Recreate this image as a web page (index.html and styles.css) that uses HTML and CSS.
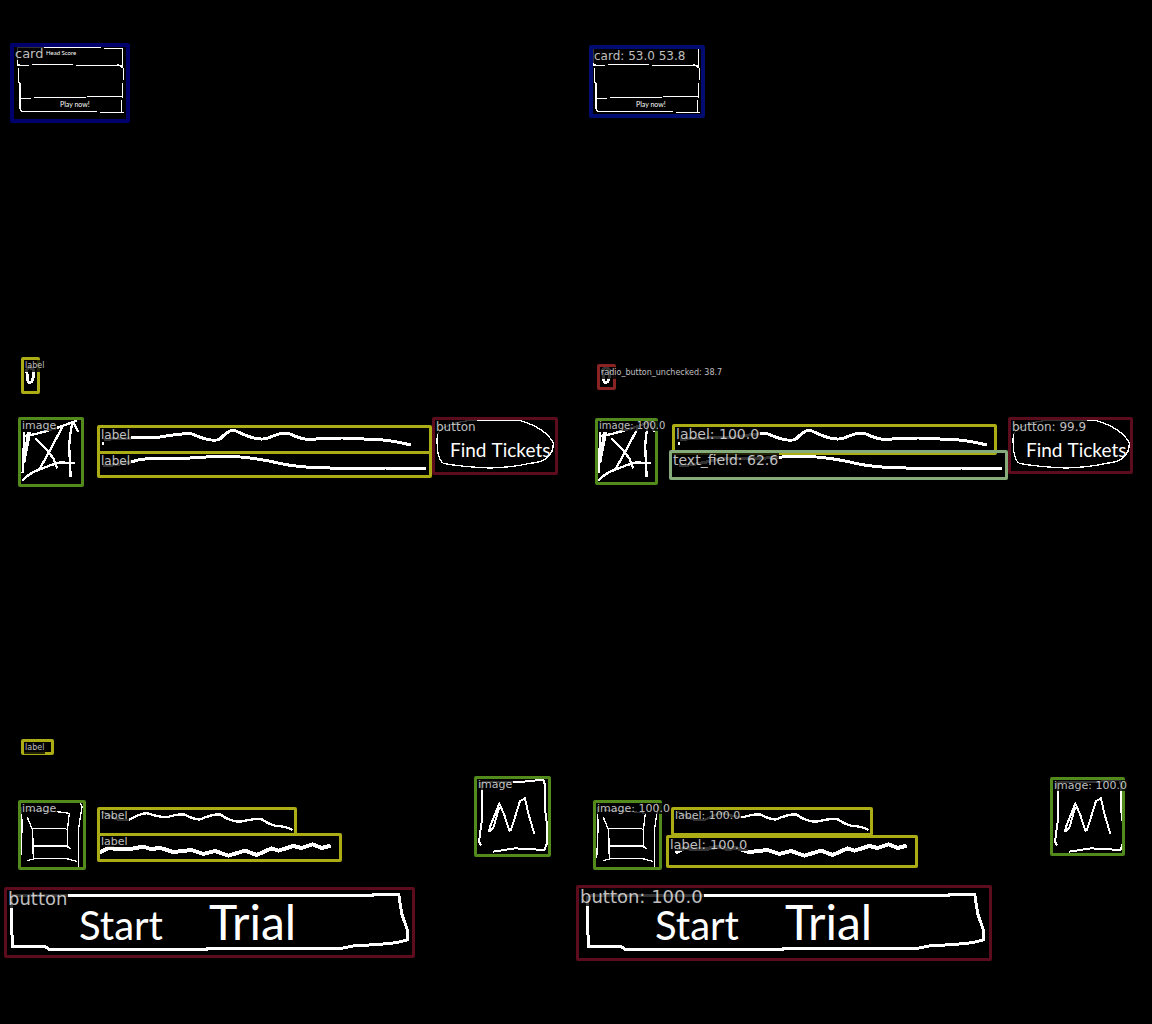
FILE: index.html
```html
<!DOCTYPE html>
<html lang="en">
<head>
<meta charset="utf-8">
<title>Sketch detection</title>
<link rel="stylesheet" href="styles.css">
</head>
<body>
<main class="compare">
  <section class="pane" aria-label="Ground truth">
    <svg class="ink" aria-hidden="true">
      <g id="sketch">
        <!-- card -->
        <g transform="translate(0 35) scale(.33333)" stroke-width="4">
          <path d="M52 38H303M312 41H368V98M52 38V90L88 92M96 88H220M228 92H352L366 92M352 88L368 98M55 98V140L60 145V222L65 230H290M370 98V135M368 145V188M365 195V232M300 232H372M60 190H92M102 187H258M262 184H368"/>
        </g>
        <!-- small ring and crossed picture -->
        <g transform="translate(10 350) scale(.33333)">
          <path d="M51 58Q50 98 60 98Q72 96 70 60Q60 48 51 58" stroke-width="9"/>
          <path stroke-width="7" d="M43 245L38 368M60 245L42 340M54 245L47 300M36 392Q60 368 85 360Q120 345 150 337L196 340M45 258Q110 248 200 212M188 214L205 245M75 265L115 305L130 325L142 355M160 225L118 305L88 358M188 215Q176 270 178 300L182 382"/>
        </g>
        <!-- wavy lines, middle row -->
        <path stroke-width="3" d="M102 443L104 443M104 440Q115 438 131 438Q148 438 160 437Q182 433 192 434Q212 443 220 439Q230 428 236 431Q258 442 268 438Q284 431 290 434Q304 441 316 439Q344 437 364 439Q388 439 411 445M103 466Q126 464 138 460Q148 458 160 458H190Q230 455 250 458Q266 460 278 463Q300 468 330 468H385L426 469"/>
        <!-- pill outline -->
        <g transform="translate(220 410) scale(.33333)" stroke-width="4">
          <path d="M652 75Q665 40 760 30H895Q980 55 1000 100Q1000 155 930 160Q880 172 810 174Q720 170 670 160Q648 145 652 75Z"/>
        </g>
        <!-- framed picture and wavy lines, bottom row -->
        <g transform="translate(0 730) scale(.33333)">
          <path stroke-width="4" d="M65 232L66 300L62 385M70 218H240L246 230L235 300V410M82 262L98 300L100 390M85 240L170 245L208 250L202 300V355M95 295H195L202 300M100 348H200L212 356M80 392L105 386H200L230 394"/>
          <path stroke-width="7" d="M305 245L350 268L385 270Q425 248 442 250Q480 262 500 262Q540 250 555 254Q585 270 600 268Q645 250 662 254Q690 275 720 275Q770 264 785 268Q810 285 830 288Q855 288 878 300"/>
          <path stroke-width="12" d="M298 368L325 354L355 357L385 358L430 350L455 358L478 353L520 366L575 360L610 372L645 363L685 377L735 362L770 375L815 355L835 362L880 348L905 354L938 343L965 354L992 347"/>
        </g>
        <!-- zigzag picture -->
        <g transform="translate(465 765) scale(.33333)" stroke-width="6">
          <path d="M48 50L50 75V170L42 230L48 242M50 50H175L235 44L240 60V130L246 180V235L238 255L150 250L85 260M72 200L75 185L103 115L118 150L133 197L138 195L165 108L180 100L190 145L208 207M75 200L86 185L103 125"/>
        </g>
        <!-- wide box -->
        <g transform="translate(0 880) scale(.33333)" stroke-width="9">
          <path d="M35 48V130L37 200H135L148 208H620V206H1020L1060 198L1140 193L1190 188L1222 180V150L1205 100L1196 42L1120 44V46H35"/>
        </g>
      </g>
    </svg>
    <p class="note note-title">Head Score</p>
    <button class="note note-play" type="button">Play now!</button>
    <button class="note note-find" type="button"><span>Find</span><span>Tickets</span></button>
    <button class="note note-trial" type="button"><span>Start</span><span class="wide">Trial</span></button>

    <div class="box card" style="left:10px;top:43px;width:120px;height:80px"><span class="tag t13">card</span></div>
    <div class="box label" style="left:21px;top:357px;width:19px;height:37px"><span class="tag t8">label</span></div>
    <div class="box image" style="left:18px;top:417px;width:66px;height:70px"><span class="tag t11">image</span></div>
    <div class="box label" style="left:97px;top:425px;width:335px;height:29px"><span class="tag t12">label</span></div>
    <div class="box label" style="left:97px;top:451px;width:335px;height:27px"><span class="tag t12">label</span></div>
    <div class="box action" style="left:432px;top:417px;width:126px;height:58px"><span class="tag t12">button</span></div>
    <div class="box label" style="left:21px;top:739px;width:33px;height:16px"><span class="tag t8">label</span></div>
    <div class="box image" style="left:18px;top:800px;width:68px;height:70px"><span class="tag t11">image</span></div>
    <div class="box label" style="left:97px;top:807px;width:200px;height:29px"><span class="tag t11">label</span></div>
    <div class="box label" style="left:97px;top:833px;width:245px;height:29px"><span class="tag t11">label</span></div>
    <div class="box image" style="left:474px;top:776px;width:77px;height:81px"><span class="tag t11">image</span></div>
    <div class="box action" style="left:4px;top:887px;width:411px;height:71px"><span class="tag t18">button</span></div>
  </section>

  <section class="pane" aria-label="Predictions">
    <svg class="ink" aria-hidden="true"><use href="#sketch"/></svg>
    <button class="note note-play" type="button">Play now!</button>
    <button class="note note-find" type="button"><span>Find</span><span>Tickets</span></button>
    <button class="note note-trial" type="button"><span>Start</span><span class="wide">Trial</span></button>

    <div class="box card found" style="left:13px;top:45px;width:116px;height:73px"><span class="tag t12">card: 53.0 53.8</span></div>
    <div class="box radio" style="left:21px;top:364px;width:19px;height:26px"><span class="tag t8">radio_button_unchecked: 38.7</span></div>
    <div class="box image" style="left:19px;top:418px;width:63px;height:67px"><span class="tag t10">image: 100.0</span></div>
    <div class="box label" style="left:96px;top:424px;width:325px;height:31px"><span class="tag t14">label: 100.0</span></div>
    <div class="box field" style="left:93px;top:450px;width:339px;height:30px"><span class="tag t14">text_field: 62.6</span></div>
    <div class="box action" style="left:432px;top:417px;width:125px;height:57px"><span class="tag t12">button: 99.9</span></div>
    <div class="box image" style="left:17px;top:800px;width:69px;height:70px"><span class="tag t11">image: 100.0</span></div>
    <div class="box label" style="left:95px;top:807px;width:202px;height:29px"><span class="tag t11">label: 100.0</span></div>
    <div class="box label" style="left:90px;top:835px;width:252px;height:33px"><span class="tag t13">label: 100.0</span></div>
    <div class="box image" style="left:474px;top:777px;width:75px;height:79px"><span class="tag t11">image: 100.0</span></div>
    <div class="box action" style="left:0;top:885px;width:416px;height:76px"><span class="tag t18">button: 100.0</span></div>
  </section>
</main>
</body>
</html>
```
FILE: styles.css
```css
* {
  box-sizing: border-box;
}

body {
  margin: 0;
  background: #000;
  color: #fff;
  font-family: "DejaVu Sans", sans-serif;
}

.compare {
  display: grid;
  grid-template-columns: 1fr 1fr;
  min-height: 100vh;
}

.pane {
  position: relative;
}

.ink {
  position: absolute;
  inset: 0;
  width: 100%;
  height: 100%;
  fill: none;
  stroke: #fff;
  stroke-linejoin: round;
  shape-rendering: crispEdges;
}

/* Handwritten words of the sketch */
.note {
  position: absolute;
  display: flex;
  align-items: baseline;
  margin: 0;
  padding: 0;
  border: 0;
  background: none;
  color: #fff;
  font-family: Lato, sans-serif;
  line-height: 1;
  white-space: nowrap;
}

.note-title {
  left: 46px;
  top: 50px;
  font-size: 6px;
}

.note-play {
  left: 20px;
  top: 99px;
  width: 102px;
  height: 12px;
  padding: 2px 0 0 40px;
  font-size: 7px;
}

.note-find {
  left: 436px;
  top: 420px;
  width: 118px;
  height: 48px;
  padding: 20px 0 0 14px;
  gap: 5px;
  font-size: 19px;
}

.note-trial {
  left: 11px;
  top: 894px;
  width: 396px;
  height: 54px;
  padding: 4px 0 0 68px;
  gap: 46px;
  font-size: 40px;
}

.wide {
  font-size: 48px;
}

/* Bounding boxes */
.box {
  position: absolute;
  border: 3px solid;
  border-radius: 2px;
}

.card { border-color: #00006c; border-width: 4px; }
.card.found { border-color: #000c70; }
.label { border-color: #acac14; }
.image { border-color: #528a1c; }
.action { border-color: #5c0c1c; }
.radio { border-color: #8a2424; }
.field { border-color: #86ac7c; }

.tag {
  position: absolute;
  left: 0;
  top: 0;
  padding: 0 1px;
  background: rgba(0, 0, 0, 0.8);
  color: rgba(255, 255, 255, 0.75);
  line-height: 1;
  white-space: nowrap;
}

.t8 { font-size: 8px; line-height: 12px; }
.t10 { font-size: 10px; }
.t11 { font-size: 11px; }
.t12 { font-size: 12px; line-height: 14px; }
.t13 { font-size: 13px; }
.t14 { font-size: 14px; }
.t18 { font-size: 18px; }
```
